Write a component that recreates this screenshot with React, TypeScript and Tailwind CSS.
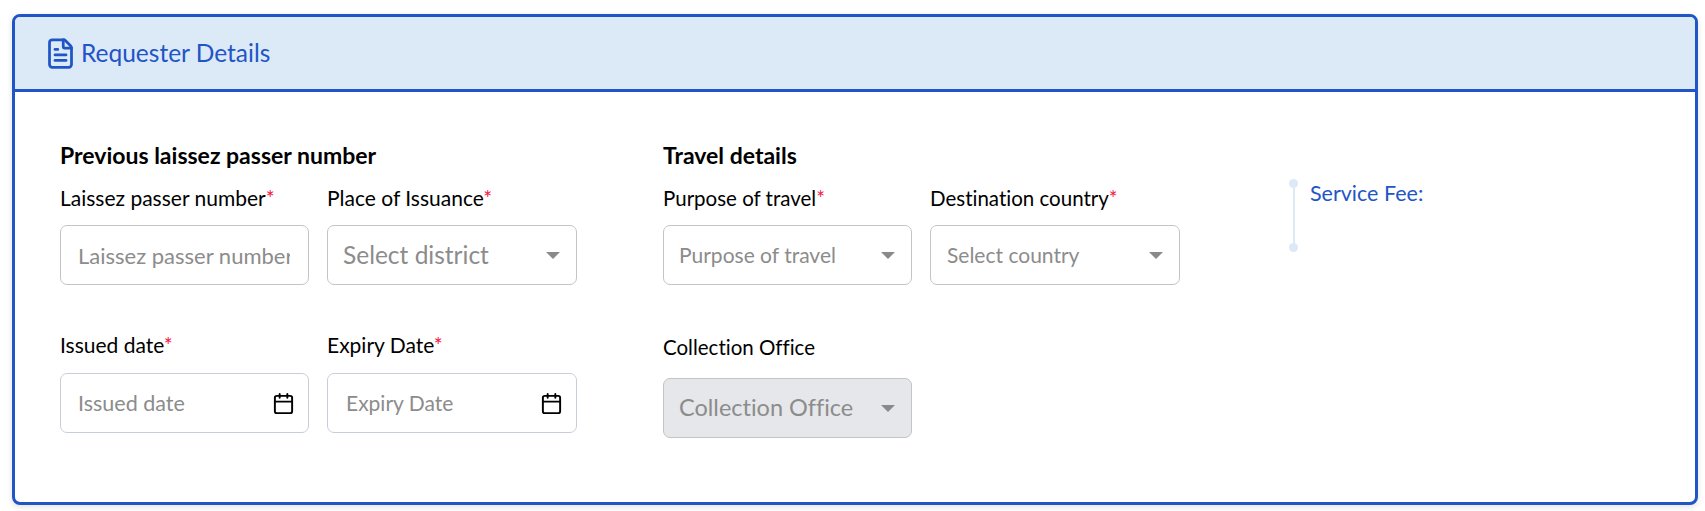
import { Calendar, FileText } from "lucide-react";

const font = "font-['Lato','Noto_Sans',sans-serif] [font-variant-ligatures:none]";

function Label({ text, required = true, size = "text-[21px]" }: { text: string; required?: boolean; size?: string }) {
  return (
    <div className={`h-[26px] ${size} leading-[26px] text-black whitespace-nowrap`}>
      {text}
      {required && <span className="text-[#f5153f]">*</span>}
    </div>
  );
}

function Caret() {
  return <span className="ml-auto h-0 w-0 shrink-0 border-x-[7px] border-t-[7px] border-x-transparent border-t-[#8a8a8a]" />;
}

function Select({ text, size = "text-[21px]", disabled = false, pad = "pl-[16px]" }: { text: string; size?: string; disabled?: boolean; pad?: string }) {
  return (
    <div
      className={`flex h-[60px] w-full items-center rounded-[7px] border border-[#c4c4c4] pr-[16px] ${pad} ${
        disabled ? "bg-[#e5e7ea]" : "bg-white"
      }`}
    >
      <span className={`${size} whitespace-nowrap text-[#8c8c8c]`}>{text}</span>
      <Caret />
    </div>
  );
}

function DateInput({ text, pad, size }: { text: string; pad: string; size: string }) {
  return (
    <div className={`flex h-[60px] w-full items-center rounded-[7px] border border-[#c8ced9] bg-white pr-[13px] ${pad}`}>
      <span className={`${size} whitespace-nowrap text-[#8c8c8c]`}>{text}</span>
      <Calendar className="ml-auto text-black" size={23} strokeWidth={2} />
    </div>
  );
}

export default function App() {
  return (
    <div className={`min-h-[511px] bg-white pb-[6px] pl-[12px] pr-[7px] pt-[14px] ${font}`}>
      <div className="h-[491px] overflow-hidden rounded-[8px] border-[3px] border-[#1f55c6] bg-white shadow-[0_2px_6px_rgba(0,0,0,0.12)]">
        <div className="flex h-[75px] items-center gap-[4px] border-b-[3px] border-[#1f55c6] bg-[#dce9f7] pl-[29px]">
          <FileText className="text-[#1f55c6]" size={33} strokeWidth={2} />
          <span className="text-[24.5px] text-[#1f55c6]">Requester Details</span>
        </div>
        <div className="flex pl-[45px] pt-[50px]">
          <div className="w-[517px]">
            <div className="h-[26px] text-[23px] font-bold leading-[26px] text-black">Previous laissez passer number</div>
            <div className="mt-[17px] grid grid-cols-[249px_250px] gap-x-[18px]">
              <div>
                <Label text="Laissez passer number" />
                <input
                  placeholder="Laissez passer number"
                  className="mt-[14px] h-[60px] w-full rounded-[7px] border border-[#c4c4c4] bg-white pl-[17px] pr-[18px] text-[22px] outline-none placeholder:text-[#8c8c8c]"
                />
              </div>
              <div>
                <Label text="Place of Issuance" />
                <div className="mt-[14px]">
                  <Select text="Select district" size="text-[24.5px]" pad="pl-[15px]" />
                </div>
              </div>
              <div className="mt-[47px]">
                <Label text="Issued date" />
                <div className="mt-[15px]">
                  <DateInput text="Issued date" pad="pl-[17px]" size="text-[21.5px]" />
                </div>
              </div>
              <div className="mt-[47px]">
                <Label text="Expiry Date" />
                <div className="mt-[15px]">
                  <DateInput text="Expiry Date" pad="pl-[18px]" size="text-[21px]" />
                </div>
              </div>
            </div>
          </div>
          <div className="ml-[86px] w-[517px]">
            <div className="h-[26px] text-[23px] font-bold leading-[26px] text-black">Travel details</div>
            <div className="mt-[17px] grid grid-cols-[249px_250px] gap-x-[18px]">
              <div>
                <Label text="Purpose of travel" size="text-[20.5px]" />
                <div className="mt-[14px]">
                  <Select text="Purpose of travel" pad="pl-[15px]" />
                </div>
              </div>
              <div>
                <Label text="Destination country" size="text-[20.5px]" />
                <div className="mt-[14px]">
                  <Select text="Select country" />
                </div>
              </div>
              <div className="mt-[49px]">
                <Label text="Collection Office" required={false} size="text-[20.5px]" />
                <div className="mt-[18px]">
                  <Select text="Collection Office" size="text-[23.5px]" disabled pad="pl-[15px]" />
                </div>
              </div>
            </div>
          </div>
          <div className="ml-[109px] mt-[37px] flex items-start">
            <div className="flex h-[73px] w-[9px] flex-col items-center">
              <span className="h-[9px] w-[9px] shrink-0 rounded-full bg-[#dce9f7]" />
              <span className="w-[2px] grow bg-[#dce9f7]" />
              <span className="h-[9px] w-[9px] shrink-0 rounded-full bg-[#dce9f7]" />
            </div>
            <span className="ml-[12px] mt-[2px] text-[21.5px] leading-[24px] text-[#1f55c6]">Service Fee:</span>
          </div>
        </div>
      </div>
    </div>
  );
}
